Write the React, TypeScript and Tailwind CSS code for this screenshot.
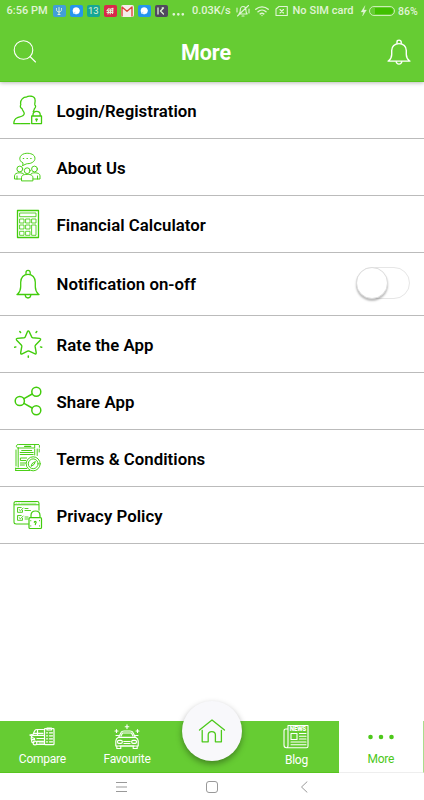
import React from 'react';

type IconProps = { w: number; h: number; sw?: number; className?: string; children: React.ReactNode };

function Icon({ w, h, sw = 1, className = '', children }: IconProps) {
  return (
    <svg
      width={w}
      height={h}
      viewBox={`0 0 ${w} ${h}`}
      fill="none"
      stroke="currentColor"
      strokeWidth={sw}
      strokeLinecap="round"
      strokeLinejoin="round"
      className={`block shrink-0 ${className}`}
    >
      {children}
    </svg>
  );
}

const LoginIcon = () => (
  <Icon w={30} h={30} sw={1.3}>
    <path d="M16.800 28.600H.8c.2-3.200 1.200-5 3.700-5.900C7.300 21.700 11 21 11.200 18.700c.2-1.900-1.900-2.900-2.200-5.200-1.700-.6-2-2.300-1.200-3.700C6.900 6 9.200 2.300 13 2.200c2.500-1.600 6-1.400 8 .2 2.200 1.600.7 4.300.8 7.300 1.200 1.200 1 2.900-.4 4-.2 1.300-.7 2.300-1.200 2.900" strokeDasharray="9 .7" />
    <path d="M20 21v-1.300c0-4.500 7.200-4.500 7.200 0V21M18.700 21h9.800v7.600h-9.800z" />
    <path d="M23.500 24v2M22.800 24.200h1.500" strokeWidth="1.500" />
  </Icon>
);

const AboutIcon = () => (
  <Icon w={30} h={30} sw={0.95}>
    <path d="M9.800 13.500l.2-2.600C5.200 9 5.900 3 11.500 1.600c4.500-1 9 .3 10.200 3.200 1.300 3.900-2.300 6.900-7.400 6.900-1.500 0-3 1.500-4.500 1.800z" />
    <path d="M10.300 6.500h.4M14 6.500h.4M17.700 6.500h.4" strokeWidth="1.200" />
    <circle cx="6.800" cy="17" r="2.900" />
    <circle cx="21.500" cy="17" r="2.900" />
    <circle cx="14.200" cy="18.700" r="2.900" />
    <path d="M8.500 28.500v-2.800c0-2.200 1.500-3.300 5.700-3.300s5.700 1.100 5.700 3.300v2.800zM8.300 27H1.500v-3.200c0-1.800 2-3 5-3 2 0 3.500.4 4.300 1.400M20.300 27H27v-3.200c0-1.800-2-3-5-3-2 0-3.500.4-4.300 1.400M4 27v-3M24.500 27v-3" />
  </Icon>
);

const CalculatorIcon = () => (
  <Icon w={30} h={30} sw={0.85}>
    <rect x="4.500" y="1.500" width="21" height="27" strokeWidth="1.300" />
    <rect x="7" y="4" width="16" height="3.700" />
    <path d="M7 10h4v4H7zM13 10h4v4h-4zM19 10h4v4h-4zM7 16h4v4H7zM13 16h4v4h-4zM7 22.300h4v4H7zM13 22.300h4v4h-4zM19 16h4v10.300h-4z" />
  </Icon>
);

const BellIcon = ({ sw = 1.3, h = 30 }: { sw?: number; h?: number }) => (
  <svg
    width="26"
    height={h}
    viewBox="0 0 26 30"
    preserveAspectRatio="none"
    fill="none"
    stroke="currentColor"
    strokeWidth={sw}
    strokeLinecap="round"
    strokeLinejoin="round"
    className="block shrink-0"
  >
    <path d="M2 25.500h22M2.500 25.300c2-2 3.200-4 3.200-7.500v-4.500c0-4.800 3-8 7.300-8s7.300 3.200 7.300 8v4.500c0 3.500 1.200 5.500 3.200 7.500" />
    <path d="M11 5.300V3.500a2.100 2.100 0 0 1 4.200 0v1.800M10.200 26c.4 4 5.200 4 5.600 0" />
  </svg>
);

const StarIcon = () => (
  <Icon w={30} h={30} sw={1.4}>
    <path d="M14.300 2.900q1-2 2 0l2.300 4.900q.4.700 1.200.9l6.700.7q1.800.4.700 1.800l-4.600 4.700q-.6.600-.5 1.500l1.100 6.200q.1 1.900-1.600 1.100l-5.400-2.600q-.7-.3-1.600 0l-5.400 2.700q-1.700.8-1.500-1.100l1.100-6.300q.1-.9-.5-1.500l-4.600-4.700q-1-1.500.6-1.800l6.800-.7q.8-.2 1.200-.9z" />
    <path d="M6.800 2.500l.8 1M23.800 2.500l-.8 1M1.700 18.300l1.200-.4M28.700 18.300l-1.200-.4M15.300 27v1.300" strokeWidth="1.500" />
  </Icon>
);

const ShareIcon = () => (
  <Icon w={30} h={30} sw={1.5}>
    <circle cx="6.800" cy="15" r="4.600" />
    <circle cx="23.300" cy="5.800" r="4.500" />
    <circle cx="23.300" cy="24.200" r="4.500" />
    <path d="M11 12.700l8.200-4.700M11 17.300l8.200 4.700" />
  </Icon>
);

const TermsIcon = () => (
  <Icon w={30} h={30} sw={0.95}>
    <g transform="translate(.7 0)">
      <path d="M4.500 5C2 5 2 1.500 4.500 1.500H25M4.500 5h16.500V2M4.500 5v19M21 6v6M23.500 6v6.500M25.700 2.500v1.800M25.500 6v3M2.300 7v16M2 25.500h11M2 27.500h14M2 25v2.500" />
      <path d="M8 7.500h10M6.500 9.500h13M6.500 11.500h13M13 15H6.700v2.500H12M6.700 20H12M6.700 22h4" />
      <path d="M11 3.400h6" strokeWidth="1.300" />
      <circle cx="19.500" cy="20.800" r="7" />
      <circle cx="19.500" cy="20.800" r="4.900" />
      <path d="M17.500 23l.8-2.300 3.400-2.200-1.200 2.600z" />
    </g>
  </Icon>
);

const PrivacyIcon = () => (
  <Icon w={30} h={30} sw={1.05}>
    <path d="M15.500 24H3.200C1.800 24 1 23.200 1 22V3.200C1 2 1.800 1.500 3 1.500h21c1.300 0 2 .6 2 1.800v7M1 4.800h25" />
    <path d="M3 3.200h1M5.500 3.200h1M8 3.200h15" strokeWidth=".5" />
    <path d="M8.200 7.500H4.500v4.800h5v-2M6 9.500l1.400 1.300L10.200 8M8.200 15.500H4.500v4.800h5v-2M6 17.500l1.400 1.300L10.200 16M12 8.500h3M12 10.500h5.500M12 17h3M12 19h3" strokeWidth=".9" />
    <path d="M18 17.700V15.500c0-6 9-6 9 0v2.200M17 17.700h10.500q1 0 1 1v8.800q0 1-1 1H17q-1 0-1-1v-8.800q0-1 1-1z" strokeWidth="1.200" />
    <path d="M21.300 22.300c0-1.200 1.800-1.200 1.800 0 0 .8-.8.700-.8 2.300" strokeWidth="1.200" />
    <path d="M17.800 20.500v.3M17.800 25.800v.3M26.500 20.500v.3M26.500 25.800v.3" />
  </Icon>
);

const CompareIcon = () => (
  <Icon w={26} h={20} sw={1.2}>
    <path d="M16 17.500H8M2.500 9L.8 8l2-.5M14.500 2.500H8c-2 0-2.500 1-4.200 5.500C2.500 9 2 10 2.300 12l.7 3.500h2" />
    <path d="M4 8.300h10.500M5 6.300h9M8.500 3v5M3 10.500l2.500 1v1.200H3M8 11.500h6.500M8 14.300h6.500M10 16h5" />
    <circle cx="6" cy="16" r="1.900" />
    <rect x="15.500" y="1.700" width="9.500" height="16" rx=".7" />
    <path d="M18 1h4.500v2H18zM17.500 5.800h1M20.500 5.800h3M17.500 8.800h1M20.500 8.800h3M17.500 11.800h1M20.500 11.800h3M17.500 14.800h1M20.500 14.800h3" />
  </Icon>
);

const FavouriteIcon = () => (
  <Icon w={26} h={26} sw={1.15}>
    <path d="M13 .8v3.800M11.200 2.700h3.600M2.500 5.500v3M1 7h3M23.500 5.500v3M22 7h3" />
    <path d="M4.800 13l2.400-4.700C7.600 7.200 8.500 7 10 7h6c1.500 0 2.400.2 2.800 1.300l2.400 4.700M7 12l1.500-3h9l1.500 3M2 11.500h2.500M21.500 11.500H24M4.500 13.300h17M4.500 13.300C2.500 14.300 1.800 15.500 1.800 17v5h22.400v-5c0-1.500-.7-2.700-2.700-3.700" />
    <path d="M2.800 22.300v2.200h4v-2M19.200 22.500v2h4v-2.200M9.800 17.500h6.400M10 19.500h6M6 22h14" />
    <rect x="3.500" y="16.300" width="4.800" height="3" rx="1.300" />
    <rect x="17.700" y="16.300" width="4.800" height="3" rx="1.300" />
  </Icon>
);

const HomeIcon = () => (
  <Icon w={30} h={30} sw={1.3}>
    <path d="M2.500 14L15 4 27.500 14M5.200 14.500v11.300h6v-7c0-4.300 7.200-4.300 7.200 0v7h6V14.500" />
  </Icon>
);

const NewsIcon = () => (
  <Icon w={28} h={26} sw={1.1}>
    <path d="M5.500 5H4C2.700 5 2 5.700 2 7v14c0 1.800.8 2.700 2.300 2.700H24.500c1 0 1.500-.4 1.500-1.500V1.500H6V21.500c0 1.300-.5 2.200-1.500 2.200" />
    <path d="M9 9.500h6v6H9zM17.500 9.500h6.500M17.500 12.200h6.500M17.500 15h6.500M9 18h15M9 20.800h15" />
    <text x="7.800" y="7.200" textLength="16.200" lengthAdjust="spacingAndGlyphs" fill="currentColor" stroke="none" fontFamily="Roboto, sans-serif" fontWeight="900" fontSize="6.5">NEWS</text>
  </Icon>
);

const badge = 'flex h-3 w-[12.500px] items-center justify-center overflow-hidden rounded-[2px] mb-px mr-[4.500px] shrink-0';

function StatusBar() {
  return (
    <div className="flex h-[23px] items-center pl-[6.500px] text-[11px] font-medium text-[#e0f4d5]">
      <span className="w-[46.500px] shrink-0 whitespace-nowrap">6:56 PM</span>
      <span className={`${badge} bg-[#429ed8]`}>
        <Icon w={12} h={12} sw={1}><path d="M6 2.500v7M3.500 3.500v1.200c0 3 5 3 5 0V3.500M5 9.500h2" /></Icon>
      </span>
      <span className={`${badge} bg-[#2595ed]`}>
        <Icon w={12} h={12}><circle cx="6.200" cy="5.800" r="3.300" fill="#fff" stroke="#fff" strokeWidth=".5" /><path d="M3.500 8.500l1.500-1" stroke="#9dceff" /></Icon>
      </span>
      <span className={`${badge} bg-[#16a695] text-[9.500px] font-normal`}>13</span>
      <span className={`${badge} bg-[#d9284b]`}>
        <Icon w={12} h={12} sw={1.1}><path d="M3 5.500l1.500-1.700 2 .5 2.500-1-.5 2.500M3 7.500h6M4 9l.7-3M6.200 9l.5-4M8.500 8.500l.2-2M3 5.700h6" /></Icon>
      </span>
      <span className={`${badge} bg-[#f5eeeb]`}>
        <Icon w={12} h={12} sw={1.4}><path d="M1 11V2l5 4.200L11 2v9" stroke="#dc4639" /></Icon>
      </span>
      <span className={`${badge} bg-[#2595ed]`}>
        <Icon w={12} h={12}><circle cx="6.200" cy="5.800" r="3.300" fill="#fff" stroke="#fff" strokeWidth=".5" /><path d="M3.500 8.500l1.500-1" stroke="#9dceff" /></Icon>
      </span>
      <span className={`${badge} bg-[#51485f]`}>
        <Icon w={12} h={12} sw={1.3}><path d="M3 3v6M8.500 3L5.500 6 8.500 9M8.500 3H7.200M5.500 6v.1" /></Icon>
      </span>
      <Icon w={20} h={12}><path d="M1.800 8.300h.01M6.300 8.300h.01M10.800 8.300h.01" strokeWidth="2.700" /></Icon>
      <span className="w-[44px] shrink-0 whitespace-nowrap">0.03K/s</span>
      <Icon w={14} h={14} sw={1.1} className="mr-[5px] mb-px">
        <path d="M3 10c1.300-1 1.300-2 1.300-4S5.500 2.500 7 2.500 9.900 4 9.900 6s.1 3 1.300 4zM6 12h2M1.500 12L12.500 1.500M1 4v4M13 5v4" />
      </Icon>
      <Icon w={14} h={12} sw={1.4} className="mr-[5.500px] mb-px">
        <path d="M.8 4.300c3.500-3.200 8.900-3.200 12.400 0M3 6.700c2.300-2.100 5.700-2.100 8 0M5.200 8.900c1.100-.9 2.500-.9 3.600 0M7 10.600h.01" />
      </Icon>
      <Icon w={13} h={12} sw={1.1} className="mr-[5px] mb-px">
        <path d="M1 10.500V4l3-2.500h8.300v9zM5 4.500l3.500 3.500M8.500 4.500L5 8" />
      </Icon>
      <span className="w-[67px] shrink-0 whitespace-nowrap tracking-[0.050px]">No SIM card</span>
      <Icon w={8} h={12} sw={0.3} className="mr-px mb-px"><path d="M4.800 1L1 7h2.500L2.500 11 6.500 5H4z" fill="currentColor" /></Icon>
      <span className="mr-[3.500px] mb-px flex h-[10px] w-[26px] shrink-0 rounded-full border border-[#c9efb3] p-px">
        <span className="ml-[4px] h-full flex-1 rounded-r-full bg-[#40c000]" />
      </span>
      <span className="whitespace-nowrap text-[10.500px]">86%</span>
    </div>
  );
}

function Header() {
  return (
    <header className="relative z-10 h-[82px] bg-[#66cc33] text-white shadow-[0_1px_4px_rgba(0,0,0,0.28)]">
      <StatusBar />
      <div className="flex h-[59px] items-center justify-between border-b border-[#58c51f] pr-3 pl-[13px]">
        <div className="flex w-[60px]">
          <Icon w={24} h={24} sw={1.1}>
            <circle cx="10.500" cy="10" r="9.300" />
            <path d="M17 16.500l5.500 5.500" />
          </Icon>
        </div>
        <h1 className="mr-[13px] pt-[1px] text-[21.500px] leading-none font-bold">More</h1>
        <div className="flex w-[60px] justify-end"><BellIcon sw={1.4} h={26} /></div>
      </div>
    </header>
  );
}

type RowProps = { icon: React.ReactNode; label: string; tall?: boolean; toggle?: boolean };

function Row({ icon, label, tall, toggle }: RowProps) {
  return (
    <li className={`flex items-center border-b border-[#bbb] pl-[13px] ${tall ? 'h-[63px]' : 'h-[57px]'}`}>
      <span className="flex w-[43.500px] shrink-0 text-[#42cc0c]">{icon}</span>
      <span className={`text-[16.800px] leading-none font-semibold tracking-[0.030px] whitespace-nowrap text-black ${tall ? 'pt-px' : 'pt-0.5'}`}>{label}</span>
      {toggle && (
        <button aria-label="Notifications" className="mr-[14px] mb-0.5 ml-auto flex h-8 w-[54px] items-center rounded-full border border-[#e6e6e6]">
          <span className="-ml-px size-8 shrink-0 rounded-full border border-[#ddd] bg-white shadow-[0_2px_2px_rgba(0,0,0,0.26)]" />
        </button>
      )}
    </li>
  );
}

function Tab({ icon, label, className = 'w-[84.700px]' }: { icon: React.ReactNode; label: string; className?: string }) {
  return (
    <div className={`flex flex-col items-center text-[12px] leading-[14px] tracking-[-0.250px] text-white ${className}`}>
      <div className="flex h-[31px] items-center">{icon}</div>
      <span>{label}</span>
    </div>
  );
}

export default function App() {
  return (
    <div className="flex h-[800px] w-[424px] flex-col overflow-hidden bg-white font-[Roboto,sans-serif]">
      <Header />
      <ul className="flex-1">
        <Row icon={<LoginIcon />} label="Login/Registration" />
        <Row icon={<AboutIcon />} label="About Us" />
        <Row icon={<CalculatorIcon />} label="Financial Calculator" />
        <Row icon={<span className="ml-[2px]"><BellIcon /></span>} label="Notification on-off" tall toggle />
        <Row icon={<StarIcon />} label="Rate the App" />
        <Row icon={<ShareIcon />} label="Share App" />
        <Row icon={<TermsIcon />} label="Terms & Conditions" />
        <Row icon={<PrivacyIcon />} label="Privacy Policy" />
      </ul>
      <nav className="relative flex h-[52px] shrink-0 border-b border-[#58c51f] bg-[#66cc33]">
        <Tab icon={<CompareIcon />} label="Compare" />
        <Tab icon={<FavouriteIcon />} label="Favourite" />
        <div className="w-[84.700px]" />
        <Tab icon={<NewsIcon />} label="Blog" className="w-[84.700px] [&>span]:pt-px" />
        <Tab
          icon={<Icon w={28} h={8}><path d="M3.500 4h.01M14 4h.01M24.500 4h.01" strokeWidth="4.600" /></Icon>}
          label="More"
          className="-mb-px flex-1 border-r border-b border-r-[#a9dd8c] border-b-[#eee] bg-white !text-[#4dc81a]"
        />
        <div className="absolute top-[-20px] left-[182px] flex size-[60px] items-center justify-center rounded-full bg-[#f8f8fb] text-[#4cc91a] shadow-[0_3px_6px_rgba(0,0,0,0.35)]">
          <HomeIcon />
        </div>
      </nav>
      <div className="flex h-[27px] shrink-0 items-center pl-[115px] text-[#999]">
        <Icon w={13} h={12}><path d="M1 1.500h11M1 6h11M1 10.500h11" strokeLinecap="butt" /></Icon>
        <span className="ml-[78px] size-[12px] rounded-[3px] border border-[#999]" />
        <Icon w={8} h={12} className="ml-[82px]"><path d="M7 .8L1.500 6 7 11.200" /></Icon>
      </div>
    </div>
  );
}
